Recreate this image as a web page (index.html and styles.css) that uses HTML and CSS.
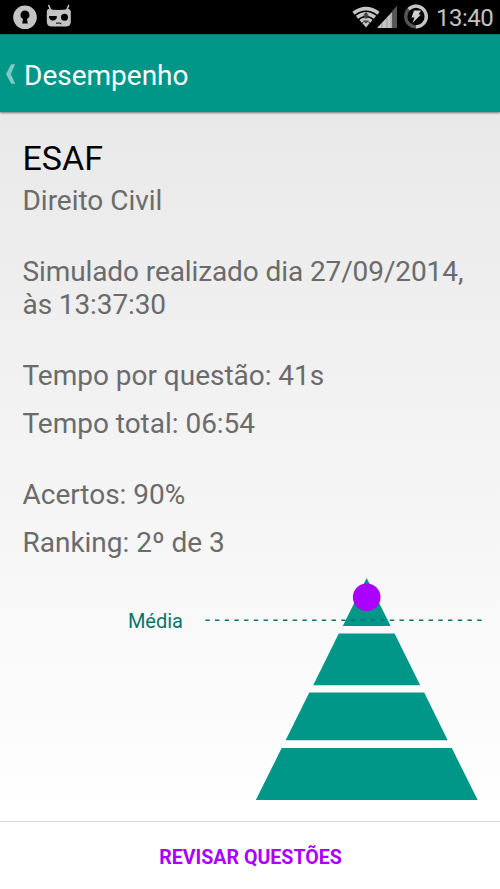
FILE: index.html
```html
<!DOCTYPE html>
<html lang="pt-BR">
<head>
<meta charset="utf-8">
<title>Desempenho</title>
<link rel="stylesheet" href="styles.css">
</head>
<body>
<div class="status">
  <svg class="status-left" width="80" height="34" viewBox="0 0 80 34">
    <circle cx="25" cy="17.300" r="11.800" fill="#c4c4c4"/>
    <path d="M25 10.600a4.500 4.500 0 0 1 2 8.500l.8 4.500h-5.600l.8-4.500a4.500 4.500 0 0 1 2-8.500z" fill="#000"/>
    <path d="M48.800 5.500l2 5M68.600 5.500l-2 5" stroke="#c4c4c4" stroke-width="1.600" stroke-linecap="round"/>
    <path d="M48.500 9q10 2 20 0q2 0 2.300 2.500v10.500q-.3 4.500-5 4.500h-14q-4.700 0-5-4.500v-10.500q.2-2.500 1.700-2.500z" fill="#c4c4c4"/>
    <path d="M49 16h7.800a3.900 3.900 0 0 1-7.800 1z" fill="#000"/>
    <circle cx="64.500" cy="17.300" r="3.500" fill="#000"/>
    <path d="M56 23.200l4-.2 1.500 1" stroke="#000" fill="none"/>
  </svg>
  <svg class="status-right" width="84" height="34" viewBox="350 0 84 34">
    <g fill="none" stroke="#c6c6c6" stroke-width="3.700">
      <path d="M353.500 13.200Q366 4.200 378.500 13.200"/>
      <path d="M357 17.300Q366 10.500 375 17.300"/>
      <path d="M360.500 21.300Q366 17 371.500 21.300"/>
    </g>
    <path d="M362.300 23Q366 20 369.700 23L366 27.500z" fill="#c6c6c6"/>
    <path d="M366 12l3 3.500h-1.500v3h-3v-3h-1.500zM363 20.500h6l-3 3z" fill="#444"/>
    <path d="M377 28L392.500 11.500V28z" fill="#c6c6c6"/>
    <path d="M392.500 10.500L397 6V28h-4.500z" fill="#555"/>
    <path d="M381.800 23v5M387 17.500V28M391 13.500V28" stroke="#888" stroke-width=".7"/>
    <circle cx="416" cy="16.500" r="10.300" fill="none" stroke="#555" stroke-width="3.300"/>
    <path d="M408.700 9.200A10.300 10.300 0 1 1 416 26.800" fill="none" stroke="#c6c6c6" stroke-width="3.300"/>
    <path d="M414 10.500h7l-2.500 4h2.500l-8.500 8.500 2-5.500h-3z" fill="#d0d0d0"/>
  </svg>
  <span class="clock">13:40</span>
</div>
<header class="bar">
  <svg class="back" width="12" height="22" viewBox="0 0 12 22"><path d="M6.200 1.200h4L5.800 11l4.400 9.700h-4L1 11z" fill="#7fcac3"/></svg>
  <h1 class="title">Desempenho</h1>
</header>
<main class="content">
  <h2 class="exam">ESAF</h2>
  <p class="line">Direito Civil</p>
  <p class="line group date">Simulado realizado dia 27/09/2014, às 13:37:30</p>
  <p class="line group">Tempo por questão: 41s</p>
  <p class="line next">Tempo total: 06:54</p>
  <p class="line group">Acertos: 90%</p>
  <p class="line next">Ranking: 2º de 3</p>
  <div class="chart">
    <span class="average">Média</span>
    <svg width="300" height="240" viewBox="200 570 300 240">
      <g fill="#009688">
        <path d="M366.700 578L390.600 626H342.800z"/>
        <path d="M338.800 633.500H394.600L420.200 685.300H313.200z"/>
        <path d="M309.300 692.500H424.200L447.700 740.300H285.600z"/>
        <path d="M281.700 748H451.800L477.700 800H255.800z"/>
      </g>
      <path d="M205.300 620.200H483" stroke="#0b7568" stroke-width="1.500" stroke-dasharray="4.400 5.310"/>
      <circle cx="366.700" cy="597.200" r="13.800" fill="#aa00ff"/>
    </svg>
  </div>
</main>
<button class="review">REVISAR QUESTÕES</button>
</body>
</html>
```

FILE: styles.css
```css
* { box-sizing: border-box; }
body {
  margin: 0;
  height: 889px;
  display: flex;
  flex-direction: column;
  overflow: hidden;
  font-family: Roboto, sans-serif;
  background: #fff;
}
h1, h2, p { margin: 0; font-weight: 400; }
svg { display: block; flex: none; }
.status {
  height: 34px;
  flex: none;
  display: flex;
  background: #000;
}
.status-right { margin-left: auto; }
.clock {
  width: 66px;
  padding-left: 2px;
  font-size: 24px;
  line-height: 36px;
  letter-spacing: -.5px;
  color: #c2c2c2;
  white-space: nowrap;
}
.bar {
  height: 78px;
  flex: none;
  display: flex;
  align-items: center;
  padding: 4px 0 0 5px;
  border-top: 1px solid #087a70;
  background: #009688;
  box-shadow: 0 1px 2px rgba(0, 0, 0, .5);
  z-index: 1;
}
.back { margin-top: -3px; }
.title {
  margin-left: 7px;
  font-size: 28px;
  line-height: 34px;
  color: #fff;
}
.content {
  flex: none;
  height: 709px;
  padding: 27px 22px 0 22.5px;
  background: linear-gradient(#e9e9e9, #fff);
}
.exam {
  font-size: 34px;
  line-height: 39px;
  color: #000;
}
.line {
  font-size: 28px;
  line-height: 33px;
  letter-spacing: -.02px;
  color: #6b6b6b;
}
.exam + .line { margin-top: 6px; }
.group { margin-top: 38px; }
.date { letter-spacing: -.1px; }
.next { margin-top: 15px; }
.chart {
  display: flex;
  margin: 11px -22px 0 0;
  justify-content: flex-end;
}
.average {
  margin: 39px 17px 0 0;
  font-size: 20px;
  line-height: 24px;
  color: #0b7568;
}
.review {
  flex: 1;
  padding: 4px 0 0 1px;
  border: 0;
  border-top: 1px solid #d9d9d9;
  background: #fff;
  font: 700 19.6px Roboto, sans-serif;
  color: #aa00ff;
}
```
